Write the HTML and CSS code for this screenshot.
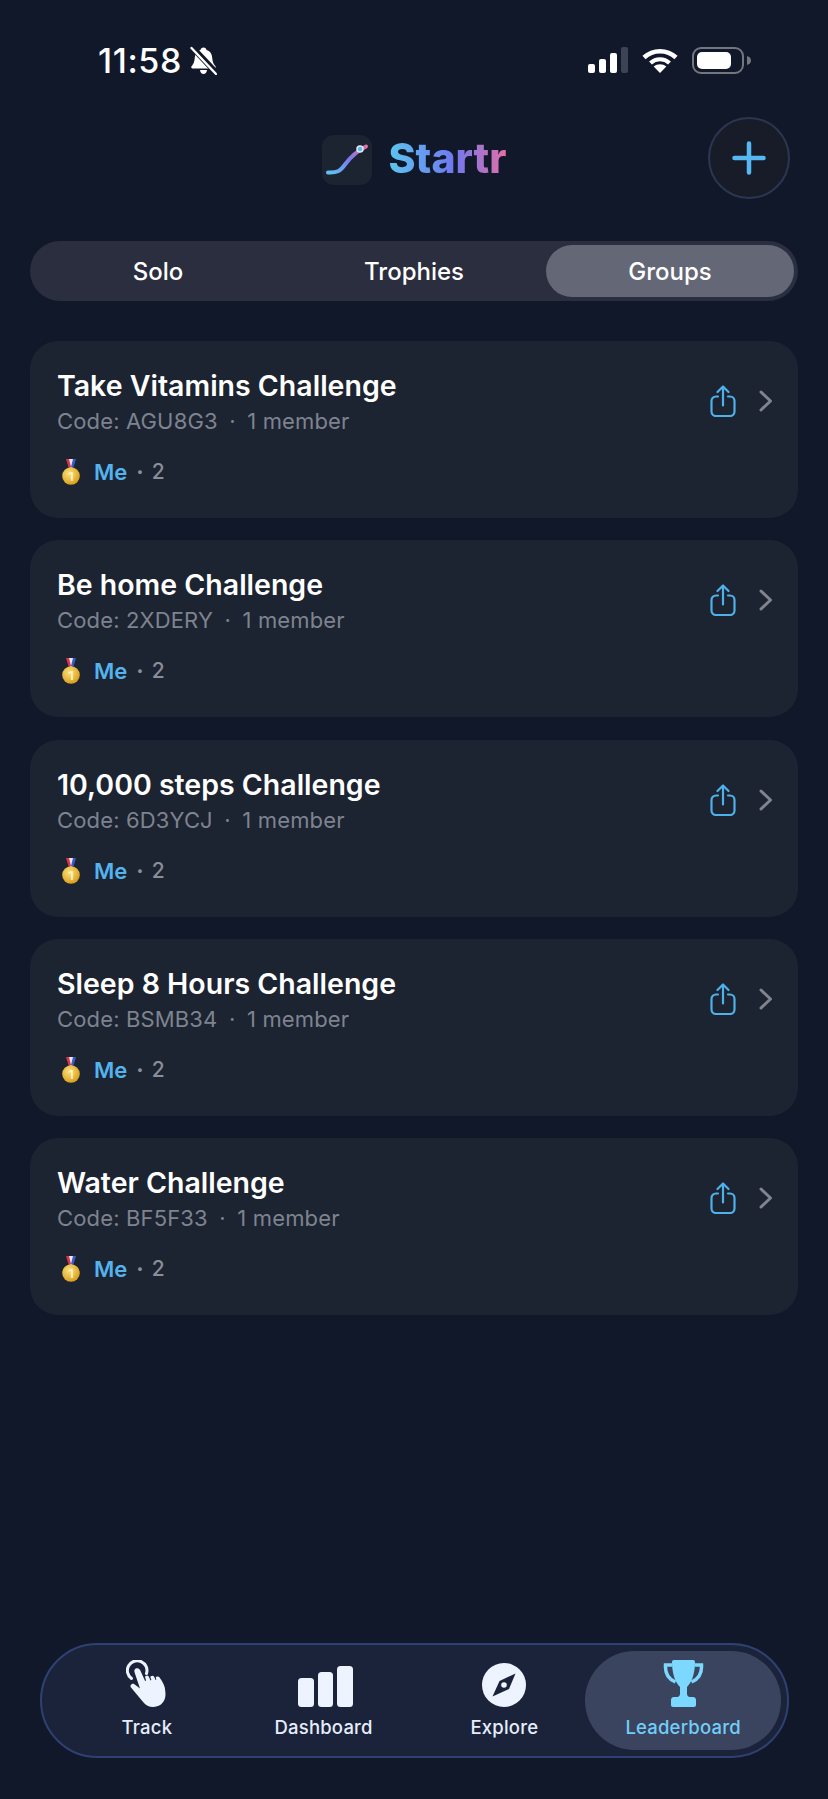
FILE: index.html
```html
<!DOCTYPE html>
<html>
<head>
    <meta charset="utf-8" />
    <title>Startr</title>
    <link rel="stylesheet" href="styles.css">
</head>
<body>
    <div class="page">
        <div class="status-bar">
            <div class="status-left">
                <span class="time">11:58</span>
                <svg class="bell" width="27" height="29" viewBox="0 0 27 29">
                    <path fill="#fff" d="M13.500 1.500c-1.700 0-2.800 1-3 2.600C6.500 5.200 5 8.500 4.700 12.500c-.3 3.500-1.200 5.500-3 7.500-.9 1-.3 2.500 1 2.500h21.600c1.300 0 1.900-1.500 1-2.500-1.800-2-2.700-4-3-7.500-.3-4-1.800-7.300-5.800-8.400-.2-1.600-1.300-2.600-3-2.600zM10 24h7c-.3 2.500-1.700 4-3.500 4S10.300 26.500 10 24z"/>
                    <path stroke="#111829" stroke-width="6" d="M1 0l25.500 27"/>
                    <path stroke="#fff" stroke-width="2.400" stroke-linecap="round" d="M1.500 2l24.500 26"/>
                </svg>
            </div>
            <div class="status-right">
                <svg width="40" height="26" viewBox="0 0 40 26">
                    <rect x="0" y="17" width="7" height="9" rx="2" fill="#fff"/>
                    <rect x="11" y="12" width="7" height="14" rx="2" fill="#fff"/>
                    <rect x="22" y="6" width="7" height="20" rx="2" fill="#fff"/>
                    <rect x="33" y="0" width="7" height="26" rx="2" fill="#3d4354"/>
                </svg>
                <svg width="36" height="26" viewBox="0 0 36 26">
                    <path fill="none" stroke="#fff" stroke-width="4.500" d="M2 10.500C11 2 25 2 34 10.500"/>
                    <path fill="none" stroke="#fff" stroke-width="4.200" d="M8.500 16c5.500-5 13.500-5 19 0"/>
                    <path fill="#fff" d="M18 26l-6.300-6.500c3.700-3 8.900-3 12.600 0z"/>
                </svg>
                <svg width="60" height="27" viewBox="0 0 60 27">
                    <rect x="1" y="1" width="50" height="25" rx="8" fill="none" stroke="#74767d" stroke-width="2"/>
                    <rect x="5" y="5" width="34" height="17" rx="5" fill="#fff"/>
                    <path fill="#74767d" d="M55 9c2.500.6 4 2.200 4 4.500s-1.500 3.900-4 4.500z"/>
                </svg>
            </div>
        </div>

        <div class="header">
            <div class="brand">
                <svg class="logo" width="50" height="50" viewBox="0 0 50 50">
                    <defs>
                        <linearGradient id="logo-line" x1="0" y1="1" x2="1" y2="0">
                            <stop offset="0" stop-color="#5cc4ee"/>
                            <stop offset="0.55" stop-color="#7b78ee"/>
                            <stop offset="1" stop-color="#e56fa8"/>
                        </linearGradient>
                    </defs>
                    <rect width="50" height="50" rx="12" fill="#1c2331"/>
                    <path fill="none" stroke="url(#logo-line)" stroke-width="4" stroke-linecap="round" d="M6 37.500c9 .5 12-1 17-8 6-8 11-13 21-18"/>
                    <circle cx="38" cy="14" r="3" fill="#5db8e8" stroke="#dcecf7" stroke-width="1.500"/>
                </svg>
                <span class="brand-name">Startr</span>
            </div>
            <button class="add-btn">
                <svg width="34" height="34" viewBox="0 0 34 34">
                    <path stroke="#55b8f2" stroke-width="4.500" stroke-linecap="round" d="M17 2.500v29M2.500 17h29"/>
                </svg>
            </button>
        </div>

        <div class="tabs">
            <div class="tab">Solo</div>
            <div class="tab">Trophies</div>
            <div class="tab tab-active">Groups</div>
        </div>

        <div class="card-list">
            <div class="card">
                <div class="card-body">
                    <div class="card-title">Take Vitamins Challenge</div>
                    <div class="card-sub"><span>Code: AGU8G3</span><span>·</span><span>1 member</span></div>
                    <div class="card-score">
                        <svg class="medal" width="18" height="26" viewBox="0 0 18 26"><use href="#medal"/></svg>
                        <span class="me">Me</span><span class="dot">·</span><span class="score">2</span>
                    </div>
                </div>
                <div class="card-actions">
                    <svg width="26" height="32" viewBox="0 0 26 32"><use href="#share"/></svg>
                    <svg width="14" height="22" viewBox="0 0 14 22"><use href="#chevron"/></svg>
                </div>
            </div>
            <div class="card">
                <div class="card-body">
                    <div class="card-title">Be home Challenge</div>
                    <div class="card-sub"><span>Code: 2XDERY</span><span>·</span><span>1 member</span></div>
                    <div class="card-score">
                        <svg class="medal" width="18" height="26" viewBox="0 0 18 26"><use href="#medal"/></svg>
                        <span class="me">Me</span><span class="dot">·</span><span class="score">2</span>
                    </div>
                </div>
                <div class="card-actions">
                    <svg width="26" height="32" viewBox="0 0 26 32"><use href="#share"/></svg>
                    <svg width="14" height="22" viewBox="0 0 14 22"><use href="#chevron"/></svg>
                </div>
            </div>
            <div class="card">
                <div class="card-body">
                    <div class="card-title">10,000 steps Challenge</div>
                    <div class="card-sub"><span>Code: 6D3YCJ</span><span>·</span><span>1 member</span></div>
                    <div class="card-score">
                        <svg class="medal" width="18" height="26" viewBox="0 0 18 26"><use href="#medal"/></svg>
                        <span class="me">Me</span><span class="dot">·</span><span class="score">2</span>
                    </div>
                </div>
                <div class="card-actions">
                    <svg width="26" height="32" viewBox="0 0 26 32"><use href="#share"/></svg>
                    <svg width="14" height="22" viewBox="0 0 14 22"><use href="#chevron"/></svg>
                </div>
            </div>
            <div class="card">
                <div class="card-body">
                    <div class="card-title">Sleep 8 Hours Challenge</div>
                    <div class="card-sub"><span>Code: BSMB34</span><span>·</span><span>1 member</span></div>
                    <div class="card-score">
                        <svg class="medal" width="18" height="26" viewBox="0 0 18 26"><use href="#medal"/></svg>
                        <span class="me">Me</span><span class="dot">·</span><span class="score">2</span>
                    </div>
                </div>
                <div class="card-actions">
                    <svg width="26" height="32" viewBox="0 0 26 32"><use href="#share"/></svg>
                    <svg width="14" height="22" viewBox="0 0 14 22"><use href="#chevron"/></svg>
                </div>
            </div>
            <div class="card">
                <div class="card-body">
                    <div class="card-title">Water Challenge</div>
                    <div class="card-sub"><span>Code: BF5F33</span><span>·</span><span>1 member</span></div>
                    <div class="card-score">
                        <svg class="medal" width="18" height="26" viewBox="0 0 18 26"><use href="#medal"/></svg>
                        <span class="me">Me</span><span class="dot">·</span><span class="score">2</span>
                    </div>
                </div>
                <div class="card-actions">
                    <svg width="26" height="32" viewBox="0 0 26 32"><use href="#share"/></svg>
                    <svg width="14" height="22" viewBox="0 0 14 22"><use href="#chevron"/></svg>
                </div>
            </div>
        </div>

        <div class="nav">
            <div class="nav-item nav-track">
                <svg width="42" height="47" viewBox="0 0 42 47">
                    <path fill="none" stroke="#eef4ff" stroke-width="3" stroke-linecap="round" d="M5.500 18.500A9.800 9.800 0 1 1 20.500 13.500"/>
                    <path fill="#eef4ff" d="M8.600 12.600c-.8-2 .2-3.800 1.800-4.300 1.600-.5 3 .3 3.700 1.800l5 11 1-.6-1-3c-.5-1.600 2.800-2.800 3.600-1l1.800 4 .9-.4-1-2.600c-.5-1.600 2.800-2.600 3.600-1l1.600 3.400.8-.4-.6-1.400c-.6-1.600 2.600-2.400 3.600-.9 3.500 5 5.800 9 5.800 13.400C41 41 35 47 27.500 47c-4.800 0-7.600-1.800-10.400-5L5 27.600c-1.600-2 1-5 3.400-3.400l5.600 4.400z"/>
                </svg>
                <span>Track</span>
            </div>
            <div class="nav-item nav-dash">
                <svg class="bars" width="55" height="41" viewBox="0 0 55 41">
                    <rect x="0" y="12" width="16" height="29" rx="3.500" fill="#eef4ff"/>
                    <rect x="20" y="6" width="15" height="35" rx="3.500" fill="#eef4ff"/>
                    <rect x="39" y="0" width="16" height="41" rx="3.500" fill="#eef4ff"/>
                </svg>
                <span>Dashboard</span>
            </div>
            <div class="nav-item nav-explore">
                <svg width="44" height="44" viewBox="0 0 44 44">
                    <circle cx="22" cy="22" r="22" fill="#eef4ff"/>
                    <path fill="#1b233a" d="M33.500 10.500L27 26 10.500 33.500 17.500 18z"/>
                    <circle cx="22" cy="22" r="2.800" fill="#eef4ff"/>
                </svg>
                <span>Explore</span>
            </div>
            <div class="nav-item nav-active">
                <svg width="41" height="47" viewBox="0 0 41 47">
                    <path fill="none" stroke="#7dd8ff" stroke-width="3.500" d="M9 5H2.500c-.5 8 2.500 14 10 17M32 5h6.500c.5 8-2.500 14-10 17"/>
                    <path fill="#7dd8ff" d="M11 0h19c1.200 0 2 .8 2 2 0 13-4 21-8 25v7c0 1.500 1 3 3 3h3c1.700 0 3 1.300 3 3v5c0 1.200-.8 2-2 2H10c-1.200 0-2-.8-2-2v-5c0-1.700 1.300-3 3-3h3c2 0 3-1.500 3-3v-7C13 23 9 15 9 2c0-1.200.8-2 2-2z"/>
                </svg>
                <span>Leaderboard</span>
            </div>
        </div>
    </div>

    <svg class="icon-defs" width="0" height="0">
        <defs>
            <radialGradient id="gold" cx="0.4" cy="0.35" r="0.7">
                <stop offset="0" stop-color="#fbe27a"/>
                <stop offset="1" stop-color="#d99a17"/>
            </radialGradient>
            <g id="medal">
                <path fill="#e6e6ee" d="M5 0h8l-3 10H8z"/>
                <path fill="#d8344a" d="M4 0h3l2 8-2 2z"/>
                <path fill="#3b5bc4" d="M14 0h-3L9 8l2 2z"/>
                <circle cx="9" cy="17" r="8.800" fill="url(#gold)"/>
                <text x="9" y="21.500" text-anchor="middle" class="medal-num">1</text>
            </g>
            <g id="share" fill="none" stroke="#4fb0ea" stroke-width="2.200" stroke-linecap="round" stroke-linejoin="round">
                <path d="M13 20.500V2M7.500 7L13 1.500 18.500 7"/>
                <path d="M8 11.500H6a4.500 4.500 0 0 0-4.500 4.500v10.500A4.500 4.500 0 0 0 6 31h14a4.500 4.500 0 0 0 4.500-4.500V16a4.500 4.500 0 0 0-4.500-4.500h-2"/>
            </g>
            <path id="chevron" fill="none" stroke="#81848d" stroke-width="3" stroke-linecap="round" stroke-linejoin="round" d="M2 2l9.500 9L2 20"/>
        </defs>
    </svg>
</body>
</html>
```

FILE: styles.css
```css
* {
    box-sizing: border-box;
}

body {
    margin: 0;
    background: #111829;
    font-family: "Inter", "Liberation Sans", sans-serif;
    color: #fff;
}

.page {
    display: flex;
    flex-direction: column;
    height: 1799px;
    padding: 40px 30px 41px 30px;
}

.icon-defs {
    position: absolute;
}

.medal-num {
    font-family: "Inter", sans-serif;
    font-size: 12px;
    font-weight: 700;
    fill: #fff3c4;
}

/* status bar */
.status-bar {
    display: flex;
    justify-content: space-between;
    align-items: center;
    height: 40px;
    padding: 0 0 0 68px;
}

.status-left {
    display: flex;
    align-items: center;
    gap: 8px;
}

.time {
    font-size: 34px;
    font-weight: 500;
    letter-spacing: 0.6px;
}

.status-right {
    display: flex;
    align-items: center;
    gap: 14px;
    margin-right: 46px;
}

/* logo row */
.header {
    display: grid;
    grid-template-columns: 1fr auto 1fr;
    align-items: center;
    height: 82px;
    margin-top: 37px;
}

.brand {
    grid-column: 2;
    display: flex;
    align-items: center;
    gap: 17px;
}

.logo {
    display: block;
    margin-top: 3px;
}

.brand-name {
    font-size: 41px;
    font-weight: 800;
    background: linear-gradient(90deg, #5cc4ee 0%, #6f78f0 55%, #e56fa8 100%);
    -webkit-background-clip: text;
    background-clip: text;
    color: transparent;
}

.add-btn {
    grid-column: 3;
    justify-self: end;
    display: flex;
    align-items: center;
    justify-content: center;
    width: 82px;
    height: 82px;
    margin-right: 8px;
    padding: 0;
    border: 2px solid #2c3650;
    border-radius: 50%;
    background: #181c29;
}

/* segmented tabs */
.tabs {
    display: flex;
    gap: 8px;
    height: 60px;
    margin-top: 42px;
    padding: 4px 3px 4px 4px;
    border-radius: 30px;
    background: #2a2e3f;
}

.tab {
    display: flex;
    align-items: center;
    justify-content: center;
    width: 248px;
    border-radius: 26px;
    font-size: 24px;
    font-weight: 500;
}

.tab-active {
    background: #646876;
}

/* challenge cards */
.card-list {
    display: flex;
    flex-direction: column;
    gap: 22.3px;
    margin-top: 40px;
}

.card {
    display: flex;
    justify-content: space-between;
    height: 177px;
    padding: 28px 25px 0 27px;
    border-radius: 28px;
    background: #1c2331;
}

.card-title {
    font-size: 28.5px;
    font-weight: 600;
    line-height: 34px;
}

.card-sub {
    display: flex;
    gap: 11.5px;
    margin-top: 3px;
    font-size: 22px;
    letter-spacing: 0.15px;
    line-height: 30px;
    color: #7e838f;
}

.card-score {
    display: flex;
    align-items: center;
    margin-top: 23px;
    padding-left: 5px;
    font-size: 22px;
    line-height: 26px;
}

.medal {
    display: block;
}

.me {
    margin-left: 14px;
    font-weight: 600;
    color: #54b3ee;
}

.dot {
    margin-left: 9px;
    color: #8a8e99;
    font-weight: 700;
}

.score {
    margin-left: 8px;
    font-size: 21px;
    font-weight: 500;
    color: #8a8e99;
}

.card-actions {
    display: flex;
    align-items: center;
    align-self: flex-start;
    gap: 23px;
    margin-top: 16px;
}

/* bottom nav */
.nav {
    display: flex;
    height: 115px;
    margin: auto 9px 0 10px;
    padding: 6px 6px 6px 17px;
    border: 2px solid #2f4172;
    border-radius: 58px;
    background: #1b233a;
}

.nav-item {
    display: flex;
    flex-direction: column;
    align-items: center;
    justify-content: flex-end;
    gap: 9px;
    padding-bottom: 12px;
    font-size: 18.500px;
    font-weight: 500;
    letter-spacing: 0.2px;
    color: #e6edfa;
}

.bars {
    margin-left: 3px;
}

.nav-track {
    width: 176px;
}

.nav-dash {
    width: 178px;
}

.nav-explore {
    width: 173px;
    padding-left: 11px;
}

.nav-active {
    width: 196px;
    border-radius: 50px;
    background: #3b445e;
    color: #72cdf8;
}
```
